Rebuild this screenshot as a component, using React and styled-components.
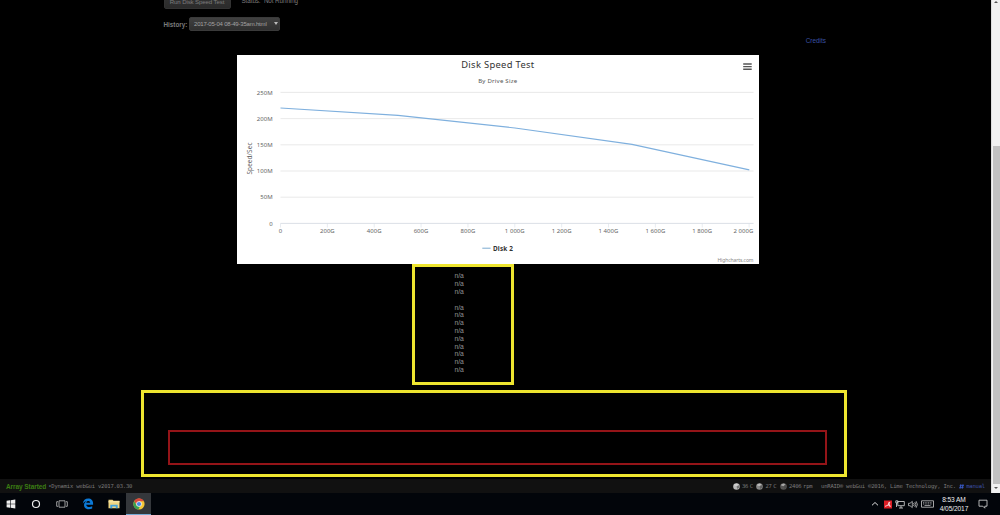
import React from 'react'
import styled, { createGlobalStyle } from 'styled-components';

const GlobalStyle = createGlobalStyle`
    * {
        box-sizing:border-box;
    }
    body {
        margin:0;
        background:#000;
        overflow:hidden;
    }
`;

const Screen = styled.div`
    display:flex;
    flex-direction:column;
    width:1000px;
    height:515px;
    background:#000;
    font-family:"Liberation Sans", Arial, sans-serif;
`;

const Browser = styled.div`
    display:flex;
    height:493px;
`;

const Page = styled.div`
    display:flex;
    flex-direction:column;
    width:991px;
    height:493px;
    overflow:hidden;
`;

const Content = styled.main`
    display:flex;
    flex-direction:column;
    height:479px;
`;

const FormRow = styled.div`
    display:flex;
    align-items:${props => props.$align || 'center'};
    height:${props => props.$height}px;
    padding-left:163.5px;
    color:#7c7c7c;
    font-size:6.3px;
    white-space:nowrap;
`;

const RunButton = styled.button`
    width:67px;
    height:15px;
    margin:-6px 11px 0 0;
    padding:0;
    border:1px solid #323232;
    border-radius:2px;
    background:linear-gradient(#333, #2b2b2b);
    color:#7c7c7c;
    font:6.1px "Liberation Sans", sans-serif;
    letter-spacing:-0.12px;
    line-height:13px;
`;

const Status = styled.span`
    line-height:8px;
    margin-top:-3px;
    letter-spacing:-0.08px;
    white-space:pre;
`;

const Label = styled.span`
    width:25.5px;
    font-weight:bold;
    font-size:6.3px;
`;

const Select = styled.div`
    display:flex;
    align-items:center;
    justify-content:space-between;
    width:91px;
    height:14px;
    padding:0 1.5px 1px 4px;
    border:1px solid #3a3a3a;
    border-radius:2px;
    background:linear-gradient(#404040, #303030);
    color:#a2a2a2;
    font-size:6px;
    letter-spacing:-0.2px;
`;

const Arrow = styled.i`
    border:2px solid transparent;
    border-top:3px solid #bbb;
    border-bottom:0;
`;

const CreditsRow = styled.div`
    display:flex;
    justify-content:flex-end;
    align-items:center;
    height:24px;
    padding:0 165px 5px 0;
`;

const Link = styled.a`
    color:#3a50a2;
    font-size:6.4px;
`;

const ChartPanel = styled.section`
    width:522px;
    height:209px;
    margin-left:236.5px;
    background:#fff;

    svg {
        display:block;
    }
    text {
        font-family:"Noto Sans", "Open Sans", sans-serif;
    }
`;

const Results = styled.div`
    width:102px;
    height:121px;
    margin-left:412px;
    padding:5.2px 0 0 39.4px;
    border:3px solid #eee52f;
    color:#929292;
    font-size:6.8px;
    line-height:7.84px;
`;

const ResultLine = styled.div`
    height:7.84px;
`;

const Outline = styled.div`
    width:706px;
    height:87px;
    margin:5px 0 0 141px;
    padding:37px 17px 0 24px;
    border:3px solid #eee52f;
`;

const EmptyBox = styled.div`
    height:35px;
    border:2px solid #941418;
`;

const Footer = styled.footer`
    display:flex;
    align-items:center;
    height:14px;
    padding:0 6px;
    background:#111;
    color:#7a7a7a;
    font:5.55px "DejaVu Sans Mono", monospace;
    white-space:pre;
`;

const ArrayState = styled.b`
    color:#3b7d13;
    font:bold 6.5px "Liberation Sans", sans-serif;
    letter-spacing:-0.08px;
`;

const Version = styled.span`
    margin-right:auto;
    padding-left:2px;
    font-size:5.5px;
    letter-spacing:-0.2px;
`;

const Sensor = styled.span`
    display:flex;
    align-items:center;
    gap:2.4px;
    width:${props => props.$width}px;
    letter-spacing:-0.2px;
    word-spacing:-1.6px;
`;

const Copyright = styled.span`
    width:138px;
    letter-spacing:-0.2px;
`;

const Manual = styled.a`
    display:flex;
    align-items:center;
    gap:2px;
    width:26px;
    color:#3b50a5;
    letter-spacing:-0.2px;
`;

const Scrollbar = styled.div`
    display:flex;
    flex-direction:column;
    align-items:center;
    width:9px;
    height:493px;
    border-left:1px solid #ddd;
    background:#f1f1f1;
`;

const ScrollArrow = styled.i`
    margin:${props => props.$down ? '3px 0 0' : '1px 0 143px'};
    border:2px solid transparent;
    ${props => props.$down ? 'border-top:2px solid #555;' : 'border-bottom:2px solid #555;'}
    ${props => props.$down ? 'border-bottom:0;' : 'border-top:0;'}
`;

const Thumb = styled.div`
    width:7px;
    height:338px;
    background:#c1c1c1;
`;

const Taskbar = styled.nav`
    display:flex;
    align-items:center;
    justify-content:space-between;
    height:22px;
    background:#02050a;
`;

const TaskGroup = styled.div`
    display:flex;
    align-items:center;
    height:22px;
`;

const TaskButton = styled.div`
    display:flex;
    align-items:center;
    justify-content:center;
    width:${props => props.$width || 25}px;
    height:22px;
    background:${props => props.$active ? '#34373b' : 'transparent'};
    border-bottom:${props => props.$active ? '1px solid #75a9d5' : '0'};
`;

const Clock = styled.div`
    width:38px;
    color:#eee;
    font-size:6.6px;
    line-height:9px;
    letter-spacing:-0.1px;
    text-align:center;
    white-space:nowrap;
`;

const speeds = ['250M', '200M', '150M', '100M', '50M', '0'];
const sizes = ['0', '200G', '400G', '600G', '800G', '1 000G', '1 200G', '1 400G', '1 600G', '1 800G', '2 000G'];
const results = ['n/a', 'n/a', 'n/a', '', 'n/a', 'n/a', 'n/a', 'n/a', 'n/a', 'n/a', 'n/a', 'n/a', 'n/a'];

const tickX = i => 43.5 + i * 46.86;
const gridY = i => 37.4 + i * 26.2;

function Chart() {
    return (
        <ChartPanel>
            <svg width="522" height="209" viewBox="0 0 522 209">
                <text x="224.2" y="12.9" fontSize="9.4" fill="#333" textLength="73">Disk Speed Test</text>
                <text x="241.2" y="27.5" fontSize="6.1" fill="#555" textLength="39">By Drive Size</text>
                <path d="M506.2 9h8.5M506.2 11.6h8.5M506.2 14.2h8.5" stroke="#555" strokeWidth="1.4" />

                {speeds.map((speed, i) => (
                    <g key={speed}>
                        <path d={'M43.5 ' + gridY(i) + 'H516.5'} stroke={i === 5 ? '#d2d8e0' : '#e3e3e3'} strokeWidth="0.8" />
                        <text x="35.7" y={gridY(i) + 2.2} fontSize="6" fill="#666" textAnchor="end" letterSpacing="0.05">{speed}</text>
                    </g>
                ))}
                {sizes.map((size, i) => (
                    <g key={size}>
                        <path d={'M' + tickX(i) + ' 168.5v4'} stroke="#d9dfe7" strokeWidth="0.6" />
                        <text x={i === 10 ? 506.5 : tickX(i)} y="178.3" fontSize="6" fill="#666" textAnchor="middle" letterSpacing="0.05">{size}</text>
                    </g>
                ))}

                <text x="15" y="119.5" fontSize="6.4" fill="#666" textLength="32" transform="rotate(-90 15 119.5)">Speed/Sec</text>
                <path
                    d="M43.5 53L161 60.4L278 73L395 89.3L512.3 114.9"
                    fill="none" stroke="#7fb0de" strokeWidth="1.2"
                />
                <path d="M245.3 193.2h8.3" stroke="#7caad0" strokeWidth="1" />
                <text x="256" y="195.5" fontSize="6.4" fontWeight="bold" fill="#333" textLength="20">Disk 2</text>
                <text x="480.5" y="206.5" fontSize="5" fill="#888" textLength="36">Highcharts.com</text>
            </svg>
        </ChartPanel>
    );
}

function SensorIcon({ color }) {
    return (
        <svg width="7" height="7" viewBox="0 0 7 7">
            <circle cx="3.5" cy="3.5" r="3.3" fill={color} />
            <path d="M.8 2.2a3 3 0 0 1 4.5-1L3.5 3.2z" fill="#ddd" opacity=".6" />
            <path d="M3.5 3.5L6.4 2v2.5L4.3 6z" fill="#444" opacity=".6" />
        </svg>
    );
}

function StatusBar() {
    return (
        <Footer>
            <ArrayState>Array Started</ArrayState>
            <Version>•Dynamix webGui v2017.03.30</Version>
            <Sensor $width={23.5}><SensorIcon color="#bbb" />36 C</Sensor>
            <Sensor $width={23.5}><SensorIcon color="#888" />27 C</Sensor>
            <Sensor $width={41.5}><SensorIcon color="#555" />2406 rpm</Sensor>
            <Copyright>unRAID® webGui ©2016, Lime Technology, Inc.</Copyright>
            <Manual>
                <svg width="6" height="7" viewBox="0 0 6 7">
                    <path d="M2.2.8L1.2 6.2M4.7.8L3.7 6.2M.8 2.5h5M.3 4.5h5" fill="none" stroke="#3a5ccc" strokeWidth="1" />
                </svg>
                manual
            </Manual>
        </Footer>
    );
}

function WindowsBar() {
    return (
        <Taskbar>
            <TaskGroup>
                <TaskButton $width={22}>
                    <svg width="10" height="10" viewBox="0 0 10 10">
                        <path d="M.6 1.8l3.4-.5v3.4H.6zM4.6 1.2L9.3.5v4.2H4.6zM.6 5.3H4v3.4l-3.4-.5zM4.6 5.3h4.7v4.2l-4.7-.7z" fill="#eee" />
                    </svg>
                </TaskButton>
                <TaskButton $width={28}>
                    <svg width="10" height="10" viewBox="0 0 10 10">
                        <circle cx="5" cy="5" r="3.5" fill="none" stroke="#eee" strokeWidth="1.2" />
                    </svg>
                </TaskButton>
                <TaskButton $width={23}>
                    <svg width="12" height="10" viewBox="0 0 12 10">
                        <path d="M3 1.8h6v6.4H3zM2 2.7H.7v4.6H2M10 2.7h1.3v4.6H10" fill="none" stroke="#c4c4c4" strokeWidth=".8" />
                    </svg>
                </TaskButton>
                <TaskButton $width={29}>
                    <svg width="12" height="12" viewBox="0 0 12 12">
                        <path d="M.8 5.8C1.1 2.4 3.4.6 6.1.6c3.2 0 5 2.1 5 4.8v1.3H4.2c.2 2.5 3.7 3 6 1.6v2.3C6.6 12.3 2 11.2 2 7.3c0-2 1-3.3 2.6-4C2.9 3.4 1.6 4.3.8 5.8zM4.3 4.8h3.9C8.1 2.5 4.6 2.5 4.3 4.8z" fill="#0b79d6" />
                    </svg>
                </TaskButton>
                <TaskButton $width={24}>
                    <svg width="12" height="10" viewBox="0 0 12 10">
                        <path d="M.5.8h4l1 .9h6v7.6H.5z" fill="#efd580" />
                        <path d="M.5 2.2h11v1.2H.5z" fill="#f8e7a9" />
                        <path d="M2.3 9.3V5.8h7.4v3.5H7.8V7.4H4.2v1.9z" fill="#42a2dc" />
                    </svg>
                </TaskButton>
                <TaskButton $active>
                    <svg width="12" height="12" viewBox="0 0 12 12">
                        <circle cx="6" cy="6" r="5.6" fill="#f5c736" />
                        <path d="M1.15 3.2A5.6 5.6 0 0 1 10.9 3.2H6L4 7.2z" fill="#dd493d" />
                        <path d="M1.15 3.2L3.8 7.4 6.8 8.7 5.3 11.6A5.6 5.6 0 0 1 1.15 3.2z" fill="#38a153" />
                        <circle cx="6" cy="6" r="2.8" fill="#eee" />
                        <circle cx="6" cy="6" r="2.1" fill="#4788e7" />
                    </svg>
                </TaskButton>
            </TaskGroup>

            <TaskGroup>
                <TaskButton $width={12}>
                    <svg width="8" height="8" viewBox="0 0 8 8">
                        <path d="M1 5.3L4 2.5l3 2.8" fill="none" stroke="#ddd" />
                    </svg>
                </TaskButton>
                <TaskButton $width={13}>
                    <svg width="8" height="9" viewBox="0 0 8 9">
                        <path d="M0 .5h8v8H0z" fill="#dc1d24" />
                        <path d="M1.2 7V5.8L3.5 5l1.2-3L6.5 1.7 5.5 4 7 6.8H5.5L4.8 5.4 3 6z" fill="#fff" opacity=".8" />
                    </svg>
                </TaskButton>
                <TaskButton $width={12}>
                    <svg width="10" height="9" viewBox="0 0 10 9">
                        <path d="M2.8 1.5h6.5v4.2H2.8zM6 6v2M4 8h4M.8.8h2v2h-2zM1.5 3v4" fill="none" stroke="#ddd" strokeWidth=".8" />
                    </svg>
                </TaskButton>
                <TaskButton $width={13}>
                    <svg width="10" height="9" viewBox="0 0 10 9">
                        <path d="M.5 3.3H2L4.3 1.4v6.2L2 5.7H.5zM5.5 3q1.3 1.5 0 3M6.8 2q2.1 2.5 0 5M8.1 1.2q2.6 3.3 0 6.6" fill="none" stroke="#ccc" strokeWidth=".75" />
                    </svg>
                </TaskButton>
                <TaskButton $width={16}>
                    <svg width="13" height="8" viewBox="0 0 13 8">
                        <path d="M.5.8h12v6.4H.5z" fill="none" stroke="#ccc" strokeWidth=".8" />
                        <path d="M2 2.7h9M2 4h9" stroke="#ccc" strokeWidth=".7" strokeDasharray="1 .7" />
                        <path d="M3.5 5.5h6" stroke="#ccc" strokeWidth=".7" />
                    </svg>
                </TaskButton>
                <Clock>
                    <div>8:53 AM</div>
                    <div>4/05/2017</div>
                </Clock>
                <TaskButton $width={20}>
                    <svg width="10" height="10" viewBox="0 0 10 10">
                        <path d="M1 1.2h8v6H6.8v2L4.8 7.2H1z" fill="none" stroke="#ddd" strokeWidth=".8" />
                    </svg>
                </TaskButton>
                <TaskButton $width={7} />
            </TaskGroup>
        </Taskbar>
    );
}

export default function App() {
    return (
        <Screen>
            <GlobalStyle />
            <Browser>
                <Page>
                    <Content>
                        <FormRow $height={17} $align="flex-start">
                            <RunButton>Run Disk Speed Test</RunButton>
                            <Status>Status:  Not Running</Status>
                        </FormRow>
                        <FormRow $height={14}>
                            <Label>History:</Label>
                            <Select>2017-05-04 08-49-35am.html<Arrow /></Select>
                        </FormRow>
                        <CreditsRow>
                            <Link>Credits</Link>
                        </CreditsRow>
                        <Chart />
                        <Results>
                            {results.map((result, i) => <ResultLine key={i}>{result}</ResultLine>)}
                        </Results>
                        <Outline>
                            <EmptyBox />
                        </Outline>
                    </Content>
                    <StatusBar />
                </Page>
                <Scrollbar>
                    <ScrollArrow />
                    <Thumb />
                    <ScrollArrow $down />
                </Scrollbar>
            </Browser>
            <WindowsBar />
        </Screen>
    );
}
